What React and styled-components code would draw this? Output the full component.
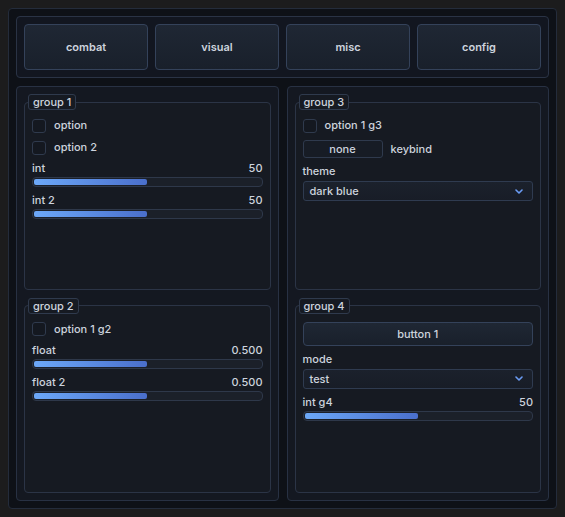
import React, { useState } from "react";
import styled, { createGlobalStyle } from "styled-components";

const GlobalStyle = createGlobalStyle`
  html, body {
    margin: 0;
    padding: 0;
    background: #1c1c1d;
  }
  body {
    padding: 8px;
    box-sizing: border-box;
    height: 100vh;
    font-family: Inter, "Noto Sans", "Liberation Sans", sans-serif;
    font-size: 11px;
    color: #cdd3dd;
  }
  #root {
    height: 100%;
  }
  * {
    box-sizing: border-box;
  }
`;

const Window = styled.div`
  height: 100%;
  display: flex;
  flex-direction: column;
  gap: 8px;
  padding: 7px;
  background: #0e1117;
  border: 1px solid #242c3b;
  border-radius: 4px;
`;

const TabBar = styled.div`
  height: 62px;
  display: grid;
  grid-template-columns: repeat(4, 1fr);
  gap: 7px;
  padding: 7px;
  background: #121620;
  border: 1px solid #2a3345;
  border-radius: 4px;
`;

const TabButton = styled.button`
  font: inherit;
  font-weight: 600;
  color: #cdd3dd;
  background: linear-gradient(180deg, #1f2734 0%, #19202b 100%);
  border: 1px solid #34425a;
  border-radius: 4px;
  cursor: pointer;
`;

const Columns = styled.div`
  flex: 1;
  min-height: 0;
  display: grid;
  grid-template-columns: 1fr 1fr;
  gap: 8px;
`;

const Panel = styled.div`
  display: flex;
  flex-direction: column;
  gap: 8px;
  padding: 7px;
  background: #141821;
  border: 1px solid #283143;
  border-radius: 4px;
  min-height: 0;
`;

const Group = styled.fieldset`
  flex: 1;
  min-width: 0;
  min-height: 0;
  margin: 0;
  padding: 8px 7px 7px;
  display: flex;
  flex-direction: column;
  gap: 7px;
  background: #161a22;
  border: 1px solid #2b3446;
  border-radius: 4px;
`;

const Legend = styled.legend`
  margin-left: -4px;
  padding: 0 4px;
  height: 16px;
  line-height: 14px;
  font-weight: 500;
  background: #161a22;
  border: 1px solid #2f3a4d;
  border-radius: 3px;
`;

const Row = styled.label`
  display: flex;
  align-items: center;
  gap: 8px;
  line-height: 15px;
  font-weight: 500;
  cursor: pointer;
`;

const Box = styled.span`
  width: 14px;
  height: 14px;
  flex: none;
  background: ${(p) => (p.$on ? "#4f7bd9" : "#141820")};
  border: 1px solid #2f3a4d;
  border-radius: 3px;
`;

const KeyButton = styled.button`
  width: 80px;
  height: 18px;
  padding: 0;
  font: inherit;
  font-weight: 500;
  color: #cdd3dd;
  background: #171c25;
  border: 1px solid #2f3a4d;
  border-radius: 3px;
`;

const Field = styled.div`
  display: flex;
  flex-direction: column;
  gap: ${(p) => p.$gap || 2}px;
`;

const FieldHead = styled.div`
  display: flex;
  justify-content: space-between;
  line-height: 13px;
  font-weight: 500;
`;

const Track = styled.div`
  height: 10px;
  padding: 1px;
  background: #1b2029;
  border: 1px solid #2e384a;
  border-radius: 4px;
`;

const Fill = styled.div`
  height: 100%;
  background: linear-gradient(90deg, #6ca8f8 0%, #4a6fcc 100%);
  border-radius: 2px;
`;

const Select = styled.div`
  height: 20px;
  display: flex;
  align-items: center;
  justify-content: space-between;
  padding: 0 9px 0 6px;
  font-weight: 500;
  background: linear-gradient(180deg, #1b212c 0%, #181d27 100%);
  border: 1px solid #2f3b50;
  border-radius: 3px;
`;

const WideButton = styled.button`
  height: 24px;
  font: inherit;
  font-weight: 500;
  color: #cdd3dd;
  background: linear-gradient(180deg, #1f2734 0%, #19202b 100%);
  border: 1px solid #34425a;
  border-radius: 4px;
`;

const Chevron = () => (
  <svg width="8" height="5" viewBox="0 0 8 5">
    <polyline
      points="1,1 4,4 7,1"
      fill="none"
      stroke="#6b9cf4"
      strokeWidth="1.6"
      strokeLinecap="round"
      strokeLinejoin="round"
    />
  </svg>
);

const Check = ({ label }) => {
  const [on, setOn] = useState(false);
  return (
    <Row onClick={() => setOn(!on)}>
      <Box $on={on} />
      {label}
    </Row>
  );
};

const Slider = ({ label, value, pct }) => (
  <Field $gap={2}>
    <FieldHead>
      <span>{label}</span>
      <span>{value}</span>
    </FieldHead>
    <Track>
      <Fill style={{ width: `${pct}%` }} />
    </Track>
  </Field>
);

const Dropdown = ({ label, value }) => (
  <Field $gap={3}>
    <FieldHead>
      <span>{label}</span>
    </FieldHead>
    <Select>
      <span>{value}</span>
      <Chevron />
    </Select>
  </Field>
);

const tabs = ["combat", "visual", "misc", "config"];

export default function App() {
  return (
    <>
      <GlobalStyle />
      <Window>
        <TabBar>
          {tabs.map((t) => (
            <TabButton key={t}>{t}</TabButton>
          ))}
        </TabBar>
        <Columns>
          <Panel>
            <Group>
              <Legend>group 1</Legend>
              <Check label="option" />
              <Check label="option 2" />
              <Slider label="int" value="50" pct={50} />
              <Slider label="int 2" value="50" pct={50} />
            </Group>
            <Group>
              <Legend>group 2</Legend>
              <Check label="option 1 g2" />
              <Slider label="float" value="0.500" pct={50} />
              <Slider label="float 2" value="0.500" pct={50} />
            </Group>
          </Panel>
          <Panel>
            <Group>
              <Legend>group 3</Legend>
              <Check label="option 1 g3" />
              <Row as="div">
                <KeyButton>none</KeyButton>
                keybind
              </Row>
              <Dropdown label="theme" value="dark blue" />
            </Group>
            <Group>
              <Legend>group 4</Legend>
              <WideButton>button 1</WideButton>
              <Dropdown label="mode" value="test" />
              <Slider label="int g4" value="50" pct={50} />
            </Group>
          </Panel>
        </Columns>
      </Window>
    </>
  );
}
